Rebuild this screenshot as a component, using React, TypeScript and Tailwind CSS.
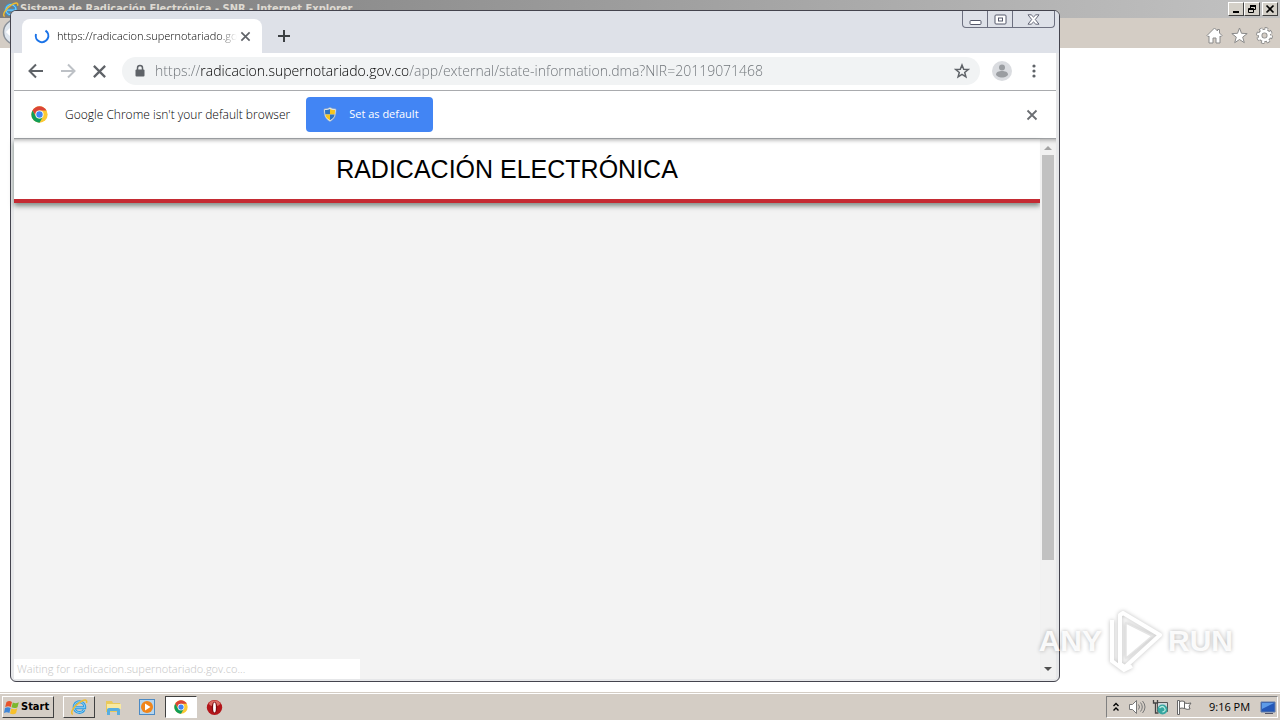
import type { ReactNode } from "react";

const URL_TEXT =
  "https://radicacion.supernotariado.gov.co/app/external/state-information.dma?NIR=20119071468";
const TAB_TITLE = "https://radicacion.supernotariado.go";

function ChromeLogo({ size }: { size: number }) {
  return (
    <svg width={size} height={size} viewBox="0 0 48 48" aria-hidden="true">
      <circle cx="24" cy="24" r="23" fill="#fcc934" />
      <path d="M4.1 12.5A23 23 0 0 1 43.9 12.5H24A11.5 11.5 0 0 0 14 29.7Z" fill="#db4437" />
      <path d="M4.1 12.5A23 23 0 0 0 24 47L34 29.7A11.5 11.5 0 0 1 14 29.7Z" fill="#0f9d58" />
      <circle cx="24" cy="24" r="11.5" fill="#fff" />
      <circle cx="24" cy="24" r="9" fill="#4285f4" />
    </svg>
  );
}

function IeLogo({ size }: { size: number }) {
  return (
    <svg width={size} height={size} viewBox="0 0 20 20" fill="none" aria-hidden="true">
      <path d="M15.6 13.2A6 6 0 1 1 16.4 10.8H5.5" stroke="#2f9be0" strokeWidth="3.2" />
      <path d="M15.6 13.2A6 6 0 1 1 16.4 10.8H5.5" stroke="#9ad8fa" strokeWidth="1" />
      <path d="M3.2 18.2C-.6 17 4.4 8.5 11.5 4.2 16 1.5 19.5 1.3 18.3 5.6" stroke="#f0bd2f" strokeWidth="1.7" />
    </svg>
  );
}

function CloseGlyph({ size }: { size: number }) {
  return (
    <svg width={size} height={size} viewBox="0 0 12 12" stroke="currentColor" strokeWidth="1.8" aria-hidden="true">
      <path d="M1.5 1.5 10.5 10.5M10.5 1.5 1.5 10.5" />
    </svg>
  );
}

function ClassicButton({ label, children }: { label: string; children: ReactNode }) {
  return (
    <button
      aria-label={label}
      className="flex h-[14px] w-4 items-center justify-center border border-t-white border-l-white border-r-[#404040] border-b-[#404040] bg-[#d4d0c8] text-black"
    >
      {children}
    </button>
  );
}

function ExplorerWindow() {
  return (
    <section className="flex flex-1 flex-col bg-white">
      <header className="flex h-[18px] items-center bg-linear-to-r from-[#7b7b7b] to-[#c2c2c2] pr-[2px] pl-[2px]">
        <IeLogo size={17} />
        <h2 className="ml-[1px] font-['DejaVu_Sans_Condensed','DejaVu_Sans',sans-serif] text-[11px] leading-[18px] font-bold whitespace-nowrap text-[#dedad2]">
          Sistema de Radicación Electrónica - SNR - Internet Explorer
        </h2>
        <div className="ml-auto flex">
          <ClassicButton label="Minimize">
            <svg width="10" height="10" viewBox="0 0 10 10">
              <path d="M2 7h6v2H2z" fill="#000" />
            </svg>
          </ClassicButton>
          <ClassicButton label="Restore">
            <svg width="10" height="10" viewBox="0 0 10 10" fill="none" stroke="#000">
              <path d="M3.5 4V1.5h5v4H7M3 1.5h6M3 2.5h6M1.5 4.5h5v4h-5zM1 5.5h6" />
            </svg>
          </ClassicButton>
          <span className="w-[2px]" />
          <ClassicButton label="Close">
            <svg width="10" height="10" viewBox="0 0 10 10" stroke="#000" strokeWidth="1.7">
              <path d="M1.5 1.5 8.5 8.5M8.5 1.5 1.5 8.5" />
            </svg>
          </ClassicButton>
        </div>
      </header>
      <div className="flex h-[30px] items-center justify-between bg-[#d4cdc5] pr-[7px] pl-[2px]">
        <svg width="28" height="28" viewBox="0 0 28 28" aria-hidden="true">
          <circle cx="14" cy="13" r="12.5" fill="#dfe6ee" stroke="#8b929a" strokeWidth="1.5" />
          <path d="M13 6 6 13l7 7M6 13h14" stroke="#fff" strokeWidth="3" fill="none" />
        </svg>
        <div className="mt-1 flex items-center gap-2">
          <button aria-label="Home">
            <svg width="17" height="17" viewBox="0 0 17 17" fill="#fff" stroke="#8a8a8a">
              <path d="M8.5 1 1 8.5l1 1.2 1-.7v7h4v-5h3v5h4V9l1 .7 1-1.2-2.5-2.5V2.5h-2V4z" />
            </svg>
          </button>
          <button aria-label="Favorites">
            <svg width="17" height="17" viewBox="0 0 17 17" fill="#fff" stroke="#8a8a8a">
              <path d="m8.5 1 2 5.3 5.7.3-4.5 3.5 1.6 5.6-4.8-3.2-4.8 3.2 1.6-5.6L.8 6.6l5.7-.3z" />
            </svg>
          </button>
          <button aria-label="Tools">
            <svg width="17" height="17" viewBox="0 0 17 17" fill="none">
              <circle cx="8.5" cy="8.5" r="6.7" stroke="#8a8a8a" strokeWidth="3.4" strokeDasharray="3.2 2.06" />
              <circle cx="8.5" cy="8.5" r="4.5" stroke="#8a8a8a" strokeWidth="4.6" />
              <circle cx="8.5" cy="8.5" r="6.3" stroke="#fff" strokeWidth="2.4" strokeDasharray="2.2 2.75" />
              <circle cx="8.5" cy="8.5" r="4.4" stroke="#fff" strokeWidth="2.8" />
            </svg>
          </button>
        </div>
      </div>
    </section>
  );
}

function CaptionButtons() {
  return (
    <div className="mr-1 flex h-[17px] self-start rounded-b-[4px] border border-t-0 border-[#6d7080] text-[#55586a]">
      <button aria-label="Minimize" className="flex w-6 items-center justify-center">
        <svg width="13" height="13" viewBox="0 0 13 13" fill="#fff" stroke="currentColor">
          <rect x="1" y="7.5" width="11" height="4" rx="1" />
        </svg>
      </button>
      <button aria-label="Maximize" className="flex w-[26px] items-center justify-center border-x border-[#6d7080]">
        <svg width="13" height="11" viewBox="0 0 13 11" fill="#fff" stroke="currentColor">
          <rect x="1" y="1" width="11" height="9" rx="1" />
          <rect x="4.5" y="4" width="4" height="3" />
        </svg>
      </button>
      <button aria-label="Close" className="flex w-[41px] items-center justify-center">
        <svg width="13" height="11" viewBox="0 0 13 11" fill="#fff" stroke="currentColor" strokeWidth="0.9">
          <path d="M1 .8h3.2L6.5 3 8.8.8H12L8.3 5.5l3.7 4.7H8.8L6.5 8l-2.3 2.2H1l3.7-4.7z" />
        </svg>
      </button>
    </div>
  );
}

function TabStrip() {
  return (
    <div className="flex h-[42px] items-end rounded-t-[5px] bg-[#dee1e8] pl-[11px]">
      <div className="flex h-[34px] w-60 items-center rounded-t-lg bg-white pr-[11px] pl-3">
        <svg width="16" height="16" viewBox="0 0 16 16" fill="none" aria-hidden="true">
          <path d="M11.5 2.6A6.3 6.3 0 1 1 2 6" stroke="#1a73e8" strokeWidth="2" />
        </svg>
        <span className="ml-[7px] mask-r-from-90% text-[11px] leading-4 font-light whitespace-nowrap text-black">
          {TAB_TITLE}
        </span>
        <button aria-label="Close tab" className="ml-auto text-[#5f6368]">
          <CloseGlyph size={11} />
        </button>
      </div>
      <button aria-label="New tab" className="mb-[11px] ml-4 text-[#3c4043]">
        <svg width="12" height="12" viewBox="0 0 12 12" stroke="currentColor" strokeWidth="2">
          <path d="M6 0v12M0 6h12" />
        </svg>
      </button>
      <div className="flex flex-1 justify-end self-start">
        <CaptionButtons />
      </div>
    </div>
  );
}

function AddressBar() {
  return (
    <div className="flex h-[38px] items-center border-b border-[#a9abae] bg-white pr-5 pb-px pl-[14px] text-[#5f6368]">
      <button aria-label="Back">
        <svg width="16" height="16" viewBox="0 0 16 16" fill="none" stroke="currentColor" strokeWidth="2">
          <path d="M15 8H2M8 1.5 1.5 8 8 14.5" />
        </svg>
      </button>
      <button aria-label="Forward" className="ml-4 text-[#bdc1c6]" disabled>
        <svg width="16" height="16" viewBox="0 0 16 16" fill="none" stroke="currentColor" strokeWidth="2">
          <path d="M1 8h13M8 1.5 14.5 8 8 14.5" />
        </svg>
      </button>
      <button aria-label="Stop loading" className="ml-4">
        <CloseGlyph size={15} />
      </button>
      <div className="ml-[15px] flex h-7 min-w-0 flex-1 items-center rounded-full bg-[#f1f3f4] pr-[10px] pl-3">
        <svg width="12" height="14" viewBox="0 0 12 14" aria-hidden="true">
          <path d="M3.5 6V4a2.5 2.5 0 0 1 5 0v2" fill="none" stroke="currentColor" strokeWidth="1.5" />
          <rect x="1.5" y="5.5" width="9" height="7" rx="1" fill="currentColor" />
        </svg>
        {/* host name is darker than the rest of the address */}
        <input
          aria-label="Address"
          defaultValue={URL_TEXT}
          className="ml-[9px] min-w-0 flex-1 bg-linear-[90deg,#6b7075_46px,#000_46px,#000_253px,#6b7075_253px] bg-clip-text text-[14px] leading-5 font-light text-transparent outline-none"
        />
        <button aria-label="Bookmark this page">
          <svg width="16" height="16" viewBox="0 0 16 16" fill="none" stroke="currentColor" strokeWidth="1.5">
            <path d="m8 2 1.7 4.2 4.5.3-3.5 2.9 1.2 4.4L8 11.4l-3.9 2.4 1.2-4.4L1.8 6.5l4.5-.3z" />
          </svg>
        </button>
      </div>
      <button aria-label="Profile" className="ml-3">
        <svg width="20" height="20" viewBox="0 0 20 20">
          <circle cx="10" cy="10" r="10" fill="#dadce0" />
          <circle cx="10" cy="6.5" r="3" fill="#9a9da1" />
          <path d="M4 13.5c0-2.5 3-3.5 6-3.5s6 1 6 3.5c0 1.5-3 3-6 3s-6-1.5-6-3z" fill="#9a9da1" />
        </svg>
      </button>
      <button aria-label="Menu" className="ml-5">
        <svg width="4" height="14" viewBox="0 0 4 14" fill="currentColor">
          <circle cx="2" cy="2" r="1.6" />
          <circle cx="2" cy="7" r="1.6" />
          <circle cx="2" cy="12" r="1.6" />
        </svg>
      </button>
    </div>
  );
}

function InfoBar() {
  return (
    <div className="flex h-12 items-center border-b border-[#a0a2a5] bg-white pr-[18px] pl-[17px]">
      <ChromeLogo size={17} />
      <p className="ml-[17px] text-[12px] leading-5 font-light whitespace-nowrap text-black">
        Google Chrome isn't your default browser
      </p>
      <button className="ml-4 flex h-[35px] w-[127px] items-center rounded-[4px] bg-[#4285f4] pl-[17px] text-[11px] whitespace-nowrap text-white">
        <svg width="14" height="15" viewBox="0 0 14 15" className="mr-3 shrink-0" aria-hidden="true">
          <path d="M7 .5c2 1 4 1.5 6 1.5 0 6-1 10-6 12.5C2 12 1 8 1 2 3 2 5 1.5 7 .5z" fill="#e8edf2" stroke="#9aa9b5" strokeWidth="0.6" />
          <path d="M7 2v5.5H2.3C2.1 6 2 4.5 2 3c2 0 3.5-.3 5-1z" fill="#2d74c4" />
          <path d="M7 2c1.5.7 3 1 5 1 0 1.5-.1 3-.3 4.5H7z" fill="#f6c51d" />
          <path d="M2.3 7.5H7v5.7c-3-1.5-4.2-3.4-4.7-5.7z" fill="#f6c51d" />
          <path d="M7 7.5h4.7c-.5 2.3-1.7 4.2-4.7 5.7z" fill="#2d74c4" />
        </svg>
        Set as default
      </button>
      <button aria-label="Dismiss" className="ml-auto text-[#6b6e72]">
        <CloseGlyph size={12} />
      </button>
    </div>
  );
}

function PageView() {
  return (
    <div className="relative flex min-h-0 flex-1 bg-[#f3f3f3]">
      <main className="min-w-0 flex-1">
        <header className="h-16 border-b-4 border-[#c42b33] bg-white shadow-[0_3px_5px_rgba(50,70,60,0.6)] inset-shadow-[0_5px_4px_-4px_rgba(0,0,0,0.35)]">
          <h1 className="pr-10 text-center font-['Liberation_Sans',Arial,sans-serif] text-[25px] leading-[60px] text-black">
            RADICACIÓN ELECTRÓNICA
          </h1>
        </header>
      </main>
      <div
        className="flex w-4 flex-col items-center bg-[#f1f1f1] pb-[7px] inset-shadow-[0_5px_4px_-4px_rgba(0,0,0,0.35)]"
        aria-hidden="true"
      >
        <svg width="8" height="16" viewBox="0 0 8 16" className="shrink-0">
          <path d="M0 11h8L4 7z" fill="#a3a3a3" />
        </svg>
        <div className="h-[76%] w-3 bg-[#c1c1c1]" />
        <svg width="8" height="5" viewBox="0 0 8 5" className="mt-auto shrink-0">
          <path d="M0 0h8L4 4z" fill="#505050" />
        </svg>
      </div>
      <div
        role="status"
        className="absolute bottom-0 left-0 h-5 w-[346px] bg-white pl-[3px] text-[11px] leading-5 font-light whitespace-nowrap text-[#c4c4c4]"
      >
        Waiting for radicacion.supernotariado.gov.co...
      </div>
    </div>
  );
}

function ChromeWindow() {
  return (
    <section className="absolute top-[10px] right-[220px] bottom-[38px] left-[10px] flex flex-col rounded-[6px] border border-[#44444e] bg-[#e6e7e9]">
      <TabStrip />
      <div className="mx-[3px] mb-[2px] flex min-h-0 flex-1 flex-col">
        <AddressBar />
        <InfoBar />
        <PageView />
      </div>
    </section>
  );
}

function Watermark() {
  return (
    <div className="absolute right-[47px] bottom-[46px] flex items-center gap-1 font-['Liberation_Sans',Arial,sans-serif] text-[30px] leading-[66px] font-bold text-white/90 text-shadow-[0_0_4px_rgba(0,0,0,0.3)]">
      <span>ANY</span>
      <svg width="58" height="66" viewBox="0 0 58 66" fill="none" className="drop-shadow-[0_0_2px_rgba(0,0,0,0.25)]" aria-hidden="true">
        <path d="M17 5 54 27 19 59 14 56V7z" stroke="#fff" strokeWidth="4" strokeLinejoin="round" />
        <path d="M20 15v35l26-22z" fill="#fff" stroke="#e4e4e4" strokeWidth="1.5" />
        <path d="M6 12v41l12 9 8-4" stroke="#fff" strokeWidth="4" />
      </svg>
      <span>RUN</span>
    </div>
  );
}

function Taskbar() {
  return (
    <footer className="mt-px flex h-[27px] items-center border-t border-white bg-[#d4cdc5] pr-[2px] pl-[2px] outline-1 outline-[#d4cdc5]">
      <button className="flex h-[22px] w-[52px] items-center gap-px border border-t-white border-l-white border-r-[#404040] border-b-[#404040] pl-px font-['DejaVu_Sans_Condensed','DejaVu_Sans',sans-serif] text-[11px] font-bold text-black">
        <svg width="16" height="15" viewBox="0 0 16 15" className="shrink-0" aria-hidden="true">
          <path d="M2.5 2C4.5.8 6 .8 8 2L6.8 7C5 6 3.5 6 1.2 7z" fill="#e8542c" />
          <path d="M8.8 2.4c2 1 3.7 1 6-.2l-1.3 5c-2 1.2-4 1.2-6 .1z" fill="#7cb82f" />
          <path d="M1 8c2-1 3.7-1 5.6 0l-1.2 5C3.5 12 2 12 0 13z" fill="#3f86d8" />
          <path d="M7.3 8.4c2 1 4 1 6-.1l-1.3 5c-2 1.1-4 1.1-6 .1z" fill="#f7c02a" />
        </svg>
        Start
      </button>
      <nav className="ml-[9px] flex items-center">
        <button aria-label="Internet Explorer" className="flex h-[22px] w-8 items-center justify-center border border-t-white border-l-white border-r-[#404040] border-b-[#404040]">
          <IeLogo size={18} />
        </button>
        <button aria-label="Windows Explorer" className="ml-[10px]">
          <svg width="17" height="17" viewBox="0 0 17 17">
            <path d="M1 2h6l1 2h7v9H1z" fill="#e9c95c" />
            <path d="M2 5h14v5H2z" fill="#f8e9a0" />
            <path d="M2 16v-5q0-2 2-2h9q2 0 2 2v5h-3v-4H5v4z" fill="#58aee0" />
          </svg>
        </button>
        <button aria-label="Media Player" className="ml-[17px]">
          <svg width="17" height="17" viewBox="0 0 17 17">
            <rect x="0.5" y="0.5" width="15" height="15" fill="#b5d5ee" stroke="#4c8ac4" />
            <circle cx="8" cy="8" r="6" fill="#f0851a" />
            <path d="M6 4.5v7L11.5 8z" fill="#fff" />
          </svg>
        </button>
        <button aria-label="Google Chrome" className="ml-[9px] flex h-[22px] w-8 items-center justify-center border border-t-[#404040] border-l-[#404040] border-r-white border-b-white bg-white">
          <ChromeLogo size={14} />
        </button>
        <button aria-label="Opera" className="ml-[9px]">
          <svg width="17" height="17" viewBox="0 0 17 17">
            <ellipse cx="8.5" cy="8.5" rx="7.7" ry="7.5" fill="#b3161b" />
            <ellipse cx="8.5" cy="4.5" rx="5.5" ry="3" fill="#da6a62" />
            <ellipse cx="8.5" cy="8.5" rx="2.7" ry="5.8" fill="#7a0c10" />
            <ellipse cx="8.5" cy="8.5" rx="1.4" ry="5" fill="#fff" />
          </svg>
        </button>
      </nav>
      <div className="ml-auto flex h-[22px] w-[172px] items-center border border-t-[#808080] border-l-[#808080] border-r-white border-b-white pl-[5px] text-black">
        <svg width="8" height="10" viewBox="0 0 8 10" fill="none" stroke="currentColor" strokeWidth="1.4" aria-hidden="true">
          <path d="M1.5 4 4 1.5 6.5 4M1.5 8.5 4 6 6.5 8.5" />
        </svg>
        <svg width="18" height="16" viewBox="0 0 18 16" fill="none" stroke="#777" className="ml-2" aria-hidden="true">
          <path d="M1.5 5.5h3l4-4v13l-4-4h-3z" fill="#fff" />
          <path d="M10.5 5.5q2 2.5 0 5M12.5 3.5q3.5 4.5 0 9M14.5 2q5 6 0 12" />
        </svg>
        <svg width="17" height="17" viewBox="0 0 17 17" className="ml-[6px]" aria-hidden="true">
          <path d="M5.5 3.5h10v9h-10z" fill="#cfd9dc" stroke="#555" />
          <circle cx="10.5" cy="10.5" r="5" fill="#36a6a0" />
          <path d="M7.5 9q3-3 5 0t-2 4" fill="none" stroke="#b9ecdf" strokeWidth="1.3" />
          <path d="M1.5 1v3h4V1M3.5 4v10h3" fill="none" stroke="#444" strokeWidth="1.3" />
        </svg>
        <svg width="16" height="16" viewBox="0 0 16 16" fill="#fff" stroke="#666" className="ml-[7px]" aria-hidden="true">
          <path d="M1.5 1.5h2v14h-2zM3.5 2.5q2.5-1 5 0v7q-2.5-1-5 0zM8.5 4q3 1 6.5 0l-2 3 1 3q-3 1-5.5-.5z" />
        </svg>
        <time className="ml-[17px] text-[11px] whitespace-nowrap">9:16 PM</time>
        <svg width="16" height="15" viewBox="0 0 16 15" className="mr-px ml-auto shrink-0" aria-hidden="true">
          <path d="M1 2h14v10H1z" fill="#2458b8" stroke="#5f7ba8" />
          <path d="M2 3h12L2 9z" fill="#5d9be8" />
          <path d="M5 13.5h8" stroke="#556" />
        </svg>
      </div>
    </footer>
  );
}

export default function App() {
  return (
    <div className="relative flex min-h-screen flex-col overflow-hidden bg-white font-['Open_Sans','Noto_Sans',sans-serif]">
      <ExplorerWindow />
      <ChromeWindow />
      <Watermark />
      <Taskbar />
    </div>
  );
}
